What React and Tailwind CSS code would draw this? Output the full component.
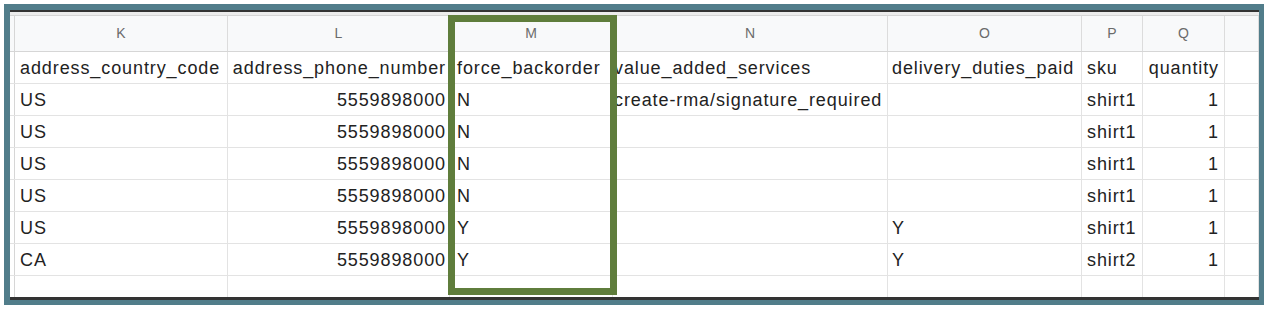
const cols = [
  { letter: "K", w: "w-[213px]" },
  { letter: "L", w: "w-[222px]" },
  { letter: "M", w: "w-[163px]" },
  { letter: "N", w: "w-[275px]" },
  { letter: "O", w: "w-[194px]" },
  { letter: "P", w: "w-[61px]" },
  { letter: "Q", w: "w-[82px]" },
  { letter: "", w: "w-[34px]" },
];

// per-column cell alignment / padding
const cellPad = [
  "pl-[5px]",
  "justify-end pr-[3px]",
  "pl-[7px]",
  "pl-[1px]",
  "pl-[4px]",
  "pl-[5px]",
  "justify-end pr-[5px]",
  "",
];

const rows = [
  ["address_country_code", "address_phone_number", "force_backorder", "value_added_services", "delivery_duties_paid", "sku", "quantity", ""],
  ["US", "5559898000", "N", "create-rma/signature_required", "", "shirt1", "1", ""],
  ["US", "5559898000", "N", "", "", "shirt1", "1", ""],
  ["US", "5559898000", "N", "", "", "shirt1", "1", ""],
  ["US", "5559898000", "N", "", "", "shirt1", "1", ""],
  ["US", "5559898000", "Y", "", "Y", "shirt1", "1", ""],
  ["CA", "5559898000", "Y", "", "Y", "shirt2", "1", ""],
];

const App = () => {
  return (
    <div className="w-[1274px] h-[314px] bg-white pt-[4px] pl-[4px]">
      <div className="w-[1260px] h-[301px] bg-[#517d8a] pt-[6px] pl-[6px] pr-[5px] pb-[5px]">
        <div className="relative w-[1249px] h-[290px] bg-white flex flex-col overflow-hidden font-['Liberation_Sans',Arial,sans-serif] text-[#222]">
          <div className="h-[2px] bg-[#333]" />
          <div className="h-[3px] bg-[#ececec]" />

          {/* column letters */}
          <div className="flex h-[37px] bg-[#f8f9fa] border-t border-b border-[#d6d6d6]">
            <div className="w-[5px] border-r border-[#d6d6d6]" />
            {cols.map((c, i) => (
              <div
                key={i}
                className={`${c.w} flex items-center justify-center border-r border-[#dcdcdc] text-[14px] text-[#6b6b6b]`}
              >
                {c.letter}
              </div>
            ))}
          </div>

          {rows.map((r, ri) => (
            <div key={ri} className="flex h-[32px] border-b border-[#e3e3e3]">
              <div className="w-[5px] border-r border-[#d6d6d6]" />
              {r.map((v, ci) => (
                <div
                  key={ci}
                  className={`${cols[ci].w} ${cellPad[ci]} flex items-center pt-[1px] border-r border-[#e3e3e3] text-[18px] tracking-[0.9px] whitespace-nowrap overflow-hidden`}
                >
                  {v}
                </div>
              ))}
            </div>
          ))}

          {/* empty trailing row */}
          <div className="flex flex-1">
            <div className="w-[5px] border-r border-[#d6d6d6]" />
            {cols.map((c, i) => (
              <div key={i} className={`${c.w} border-r border-[#e3e3e3]`} />
            ))}
          </div>
          <div className="h-[3px] bg-[#333]" />

          {/* highlight around column M */}
          <div className="absolute left-[438px] top-[5px] w-[169px] h-[280px] border-[7px] border-[#5f7d3c] pointer-events-none" />
        </div>
      </div>
    </div>
  );
};

export default App;
